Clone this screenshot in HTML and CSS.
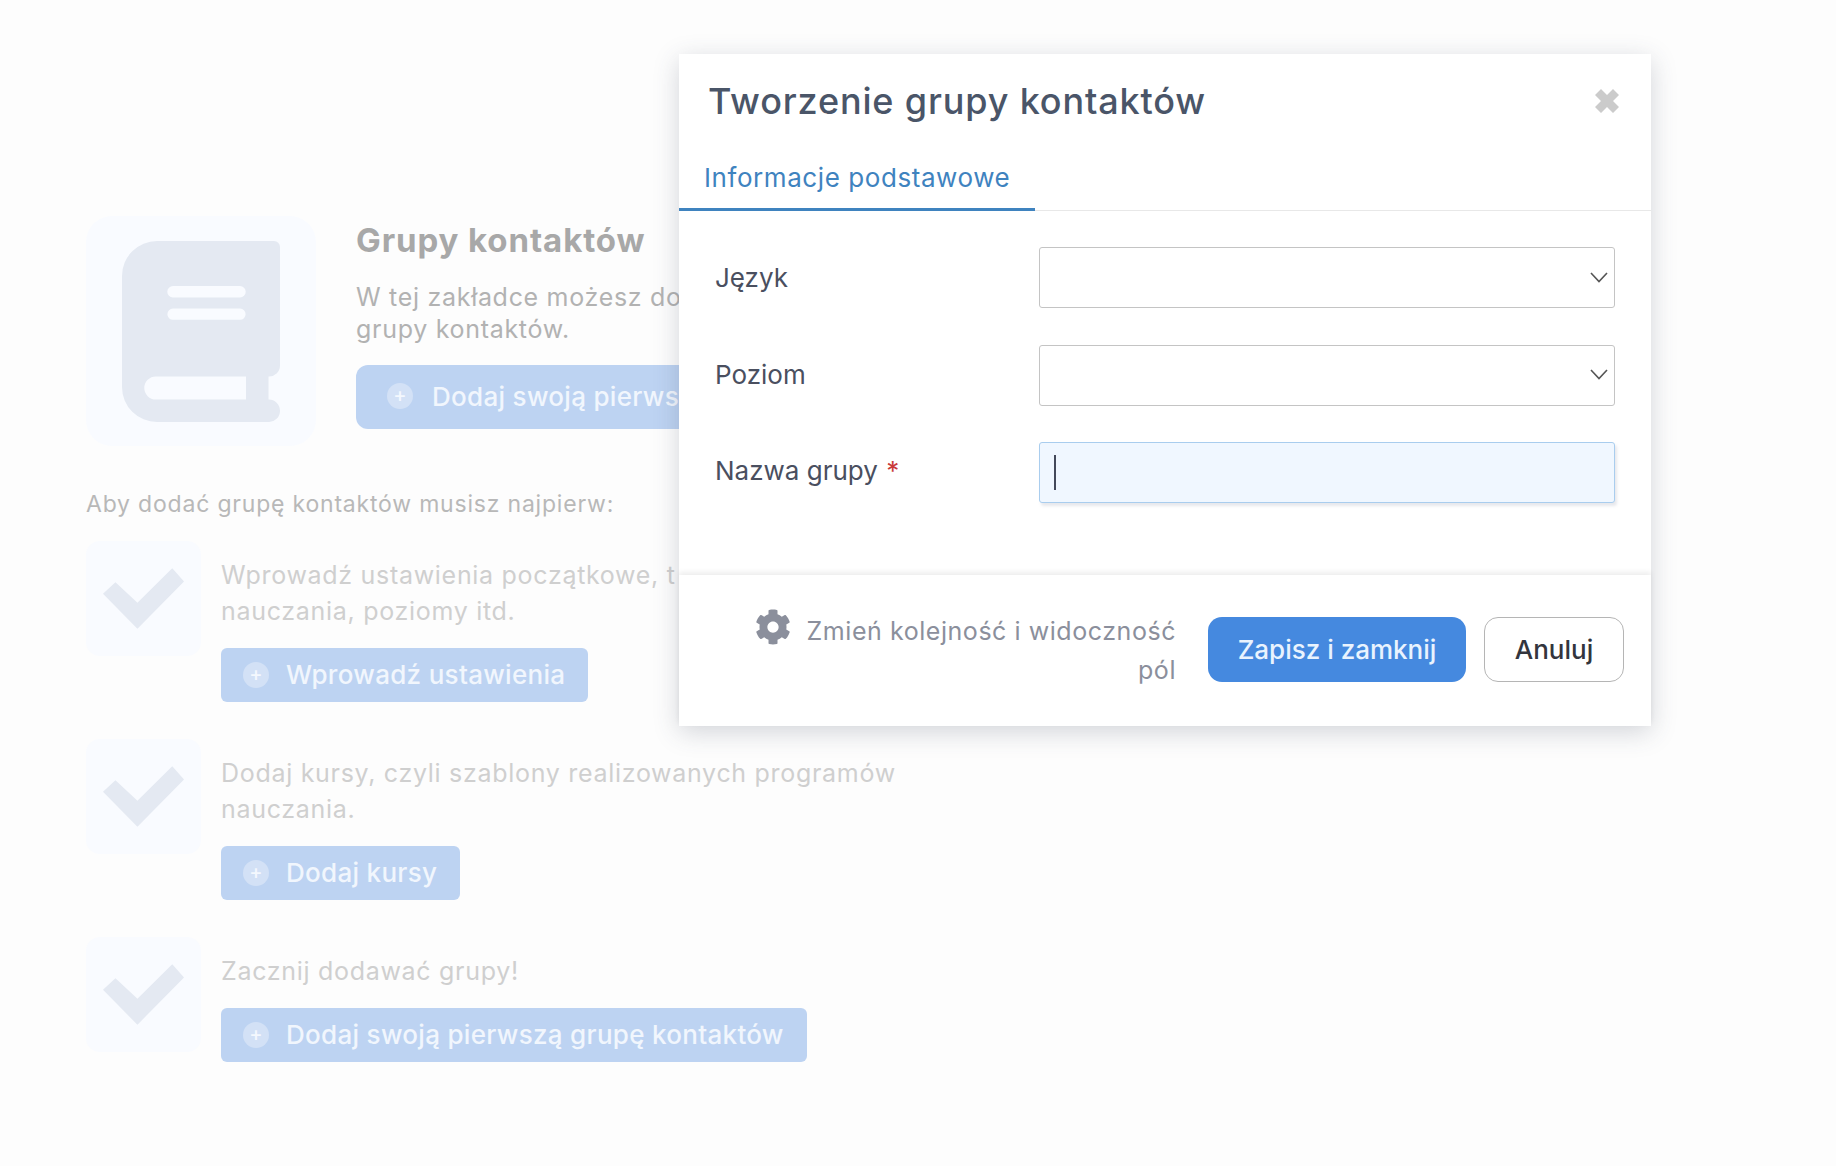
FILE: index.html
```html
<!DOCTYPE html>
<html lang="pl">
<head>
<meta charset="utf-8">
<title>Tworzenie grupy kontaktów</title>
<link rel="stylesheet" href="styles.css">
</head>
<body>
<main class="page">
  <section class="hero">
    <div class="hero-icon">
      <svg class="book" viewBox="0 0 158 181"><path fill-rule="evenodd" d="M35 0H152a6 6 0 0 1 6 6V124.5a11 11 0 0 1-11.5 11V158.5a11.2 11.2 0 0 1 11.5 11.2 11.2 11.2 0 0 1-11.5 11.3H35A35 35 0 0 1 0 146V35A35 35 0 0 1 35 0ZM33.8 135.5H124V158.5H33.8a11.5 11.5 0 0 1 0-23ZM51 45H118a5.7 5.7 0 0 1 0 11.4H51a5.7 5.7 0 0 1 0-11.4ZM51 67.6H118a5.6 5.6 0 0 1 0 11.2H51a5.6 5.6 0 0 1 0-11.2Z"/></svg>
    </div>
    <div class="hero-text">
      <h1 class="hero-title">Grupy kontaktów</h1>
      <p class="hero-desc">W tej zakładce możesz do<br>grupy kontaktów.</p>
      <a class="btn-bg btn-hero"><span class="plus">+</span>Dodaj swoją pierws</a>
    </div>
  </section>
  <p class="intro">Aby dodać grupę kontaktów musisz najpierw:</p>
  <section class="step">
    <div class="check-box"><svg class="check" viewBox="0 0 81.4 60.7"><polygon points="0,25.7 12.5,14 34.6,34.7 69.6,0 81.4,13.3 34.6,60.7"/></svg></div>
    <div class="step-body">
      <p class="step-text">Wprowadź ustawienia początkowe, t<br>nauczania, poziomy itd.</p>
      <a class="btn-bg"><span class="plus">+</span>Wprowadź ustawienia</a>
    </div>
  </section>
  <section class="step">
    <div class="check-box"><svg class="check" viewBox="0 0 81.4 60.7"><polygon points="0,25.7 12.5,14 34.6,34.7 69.6,0 81.4,13.3 34.6,60.7"/></svg></div>
    <div class="step-body">
      <p class="step-text">Dodaj kursy, czyli szablony realizowanych programów<br>nauczania.</p>
      <a class="btn-bg"><span class="plus">+</span>Dodaj kursy</a>
    </div>
  </section>
  <section class="step">
    <div class="check-box"><svg class="check" viewBox="0 0 81.4 60.7"><polygon points="0,25.7 12.5,14 34.6,34.7 69.6,0 81.4,13.3 34.6,60.7"/></svg></div>
    <div class="step-body">
      <p class="step-text">Zacznij dodawać grupy!</p>
      <a class="btn-bg"><span class="plus">+</span>Dodaj swoją pierwszą grupę kontaktów</a>
    </div>
  </section>
</main>

<div class="modal">
  <header class="modal-head">
    <h2 class="modal-title">Tworzenie grupy kontaktów</h2>
    <svg class="close" viewBox="0 0 24 24"><polygon points="6,0 12,6 18,0 24,6 18,12 24,18 18,24 12,18 6,24 0,18 6,12 0,6"/></svg>
  </header>
  <nav class="tabs"><a class="tab">Informacje podstawowe</a></nav>
  <form class="form">
    <label class="label">Język</label>
    <div class="field">
      <svg class="chev" viewBox="0 0 18 11"><polyline points="1,1 9,9.5 17,1"/></svg>
    </div>
    <label class="label">Poziom</label>
    <div class="field">
      <svg class="chev" viewBox="0 0 18 11"><polyline points="1,1 9,9.5 17,1"/></svg>
    </div>
    <label class="label label-top">Nazwa grupy <span class="req">*</span></label>
    <div class="field field-active"><span class="caret"></span></div>
  </form>
  <footer class="modal-foot">
    <p class="note"><svg class="gear" viewBox="0 0 512 512"><path d="M487.4 315.7l-42.6-24.6c4.3-23.2 4.3-47 0-70.2l42.6-24.6c4.9-2.8 7.1-8.6 5.5-14-11.1-35.6-30-67.8-54.7-94.6-3.8-4.1-10-5.1-14.8-2.3L380.8 110c-17.9-15.4-38.5-27.3-60.8-35.1V25.8c0-5.6-3.9-10.5-9.4-11.7-36.7-8.2-74.3-7.8-109.2 0-5.5 1.2-9.4 6.1-9.4 11.7V75c-22.2 7.9-42.8 19.8-60.8 35.1L88.7 85.5c-4.9-2.8-11-1.9-14.8 2.3-24.7 26.7-43.6 58.9-54.7 94.6-1.7 5.4.6 11.2 5.5 14L67.3 221c-4.3 23.2-4.3 47 0 70.2l-42.6 24.6c-4.9 2.8-7.1 8.6-5.5 14 11.1 35.6 30 67.8 54.7 94.6 3.8 4.1 10 5.1 14.8 2.3l42.6-24.6c17.9 15.4 38.5 27.3 60.8 35.1v49.2c0 5.6 3.9 10.5 9.4 11.7 36.7 8.2 74.3 7.8 109.2 0 5.5-1.2 9.4-6.1 9.4-11.7v-49.2c22.2-7.9 42.8-19.8 60.8-35.1l42.6 24.6c4.9 2.8 11 1.9 14.8-2.3 24.7-26.7 43.6-58.9 54.7-94.6 1.5-5.5-.7-11.3-5.6-14.1zM256 336c-44.1 0-80-35.9-80-80s35.9-80 80-80 80 35.9 80 80-35.9 80-80 80z"/></svg>Zmień kolejność i widoczność pól</p>
    <button class="btn btn-save" type="button">Zapisz i zamknij</button>
    <button class="btn btn-cancel" type="button">Anuluj</button>
  </footer>
</div>
</body>
</html>
```
FILE: styles.css
```css
* { box-sizing: border-box; }
html, body { margin: 0; height: 100%; }
body {
  background: #fdfdfd;
  font-family: "Inter", "Liberation Sans", sans-serif;
  overflow: hidden;
  position: relative;
}
p, h1, h2 { margin: 0; }

.page { padding: 216px 0 0 86px; }

.hero { display: flex; gap: 40px; }
.hero-icon {
  width: 230px; height: 230px;
  padding-top: 1px;
  background: #f9fbff;
  border-radius: 26px;
  display: flex; align-items: center; justify-content: center;
}
.book { width: 158px; height: 181px; fill: #e4e9f2; }
.hero-text { width: 800px; }
.hero-title { font-size: 33px; font-weight: 700; line-height: 48px; color: #a8a8a8; letter-spacing: .9px; }
.hero-desc { margin-top: 17px; font-size: 25px; line-height: 32px; color: #b2b2b2; letter-spacing: .7px; white-space: nowrap; }

.btn-bg {
  display: inline-flex; align-items: center;
  height: 54px;
  margin-top: 19px;
  padding: 0 23px 1px 22px;
  background: #bdd3f2;
  border-radius: 6px;
  color: #f1f6fd;
  font-size: 26px;
  font-weight: 500;
  letter-spacing: .3px;
  white-space: nowrap;
}
.btn-hero { width: 420px; height: 64px; margin-top: 20px; border-radius: 12px; padding: 0 0 2px 31px; }
.plus {
  width: 26px; height: 26px;
  margin-right: 17px;
  border-radius: 50%;
  background: #d3e1f6;
  color: #f4f8fe;
  font-size: 20px;
  line-height: 25px;
  letter-spacing: 0;
  text-align: center;
  flex: none;
}
.btn-hero .plus { margin-right: 19px; }

.intro { margin-top: 41px; font-size: 23px; line-height: 34px; letter-spacing: .8px; color: #b8b8b8; }

.step { display: flex; gap: 20px; margin-top: 37px; }
.intro + .step { margin-top: 20px; }
.check-box {
  width: 115px; height: 115px;
  background: #f9fbff;
  border-radius: 14px;
  display: flex; align-items: center; justify-content: center;
  flex: none;
}
.check { width: 81px; height: 61px; fill: #e4e9f2; }
.step-body { padding-top: 16px; }
.step-text { font-size: 25px; line-height: 36px; letter-spacing: .7px; color: #cfcfcf; white-space: nowrap; }

.modal {
  position: absolute;
  left: 679px; top: 54px;
  width: 972px; height: 672px;
  background: #fff;
  box-shadow: 0 6px 24px rgba(60, 70, 90, .22);
  display: flex; flex-direction: column;
}
.modal-head {
  display: flex; align-items: center; justify-content: space-between;
  height: 93px;
  padding: 0 32px 0 29px;
}
.modal-title { font-size: 36px; font-weight: 500; letter-spacing: .85px; color: #4a5568; }
.close { width: 24px; height: 24px; fill: #cbcbcb; }

.tabs { height: 64px; border-bottom: 1px solid #e8e8e8; display: flex; }
.tab {
  display: flex; align-items: center;
  width: 356px; height: 64px;
  padding: 0 0 0 25px;
  border-bottom: 3px solid #3f83bf;
  color: #3f83bf;
  font-size: 26px;
  letter-spacing: .57px;
}

.form {
  flex: 1;
  display: grid;
  grid-template-columns: 324px 1fr;
  grid-auto-rows: 61px;
  row-gap: 36.5px;
  padding: 36px 36px 0;
}
.label { display: flex; align-items: center; gap: 1px; padding-bottom: 1px; font-size: 26px; color: #4a4f5f; white-space: pre; }
.label-top { align-items: flex-start; padding-top: 13px; }
.req { color: #c93a3a; }
.field {
  position: relative;
  border: 1px solid #c4c4c4;
  border-radius: 3px;
  background: #fff;
  display: flex; align-items: center;
}
.field-active {
  background: #f0f7ff;
  border-color: #a9cdee;
  box-shadow: 2px 3px 3px rgba(120, 130, 150, .18);
  padding-left: 14px;
}
.chev {
  position: absolute; right: 6px; top: 50%;
  width: 18px; height: 11px; margin-top: -6px;
  fill: none; stroke: #555; stroke-width: 1.6;
}
.caret { width: 2px; height: 35px; background: #44495a; }

.modal-foot {
  height: 151px;
  display: flex; align-items: center; justify-content: flex-end;
  padding: 0 27px 2px 0;
  background: #fff;
  box-shadow: 0 -3px 5px rgba(0, 0, 0, .07);
}
.note {
  flex: none;
  width: 428px;
  margin-right: 32px;
  padding-top: 2px;
  text-align: right;
  font-size: 25px;
  line-height: 39px;
  letter-spacing: .55px;
  color: #8b8f9c;
}
.gear { width: 36px; height: 36px; margin: -14px 16px 0 0; fill: #8b8f9c; vertical-align: -5px; }
.btn {
  height: 65px;
  border-radius: 14px;
  font-family: inherit;
  font-size: 26px;
  font-weight: 500;
  cursor: pointer;
}
.btn-save { width: 258px; background: #4589df; border: 0; color: #e9f3fe; margin-right: 18px; }
.btn-cancel { width: 140px; background: #fff; border: 1px solid #b5b5b5; color: #33353d; }
```
